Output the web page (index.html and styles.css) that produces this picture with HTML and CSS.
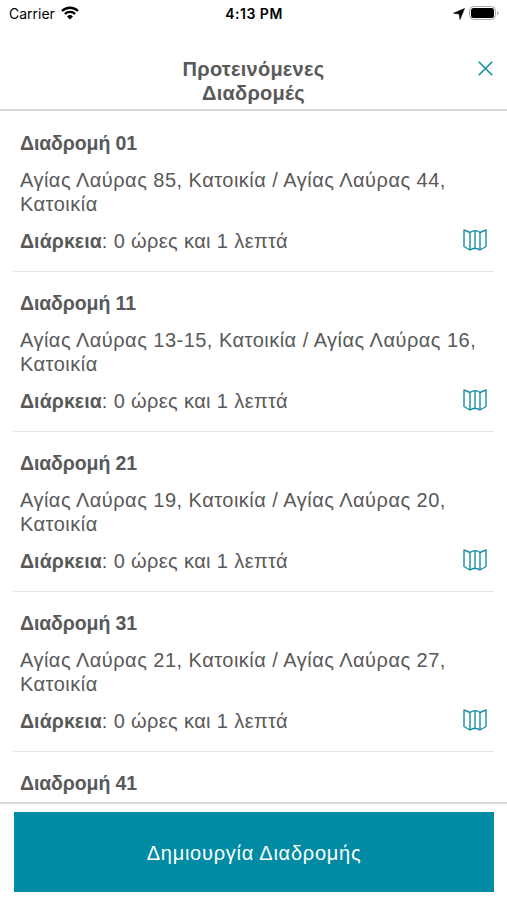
FILE: index.html
```html
<!DOCTYPE html>
<html lang="el">

<head>
    <meta charset="utf-8">
    <title>Προτεινόμενες Διαδρομές</title>
    <meta name="viewport" content="width=device-width,initial-scale=1">
    <link rel="stylesheet" href="styles.css">
</head>

<body>
    <svg class="sprite">
        <symbol id="map" viewBox="0 0 24 22">
            <path d="M1 1L7 3.500Q12-.2 17 3.500L23 1V17.500L17 21Q12 17.500 7 21L1 17.500zM7 3.500V21M12 1.700V19.200M17 3.500V21" />
        </symbol>
    </svg>
    <div class="status">
        <div class="carrier">
            <span>Carrier</span>
            <svg class="wifi" viewBox="0 0 18 14">
                <path d="M1 5a11.500 11.500 0 0 1 16 0M3.800 8a7.400 7.400 0 0 1 10.400 0" />
                <path class="dot" d="M9 13.500L6 10.400a4.300 4.300 0 0 1 6 0z" />
            </svg>
        </div>
        <div class="time">4:13 PM</div>
        <div class="power">
            <svg class="arrow" viewBox="0 0 12 12">
                <path d="M11.500 .5L7 11.500 6.200 6 .5 5.200z" />
            </svg>
            <svg class="battery" viewBox="0 0 30 14">
                <rect class="shell" x=".5" y=".5" width="26" height="13" rx="4" />
                <rect x="2" y="2" width="23" height="10" rx="2.500" />
                <path class="cap" d="M28 5v4.500q1.500-.7 1.500-2.250T28 5z" />
            </svg>
        </div>
    </div>
    <div class="header">
        <h1>Προτεινόμενες Διαδρομές</h1>
        <button class="close">
            <svg viewBox="0 0 14 14">
                <path d="M.7.7l12.600 12.600M13.300.7L.7 13.300" />
            </svg>
        </button>
    </div>
    <div class="list">
        <div class="route">
            <h2>Διαδρομή 01</h2>
            <p>Αγίας Λαύρας 85, Κατοικία / Αγίας Λαύρας 44, Κατοικία</p>
            <div class="duration">
                <span><b>Διάρκεια</b>: 0 ώρες και 1 λεπτά</span>
                <svg class="map"><use href="#map" /></svg>
            </div>
        </div>
        <div class="route">
            <h2>Διαδρομή 11</h2>
            <p>Αγίας Λαύρας 13-15, Κατοικία / Αγίας Λαύρας 16, Κατοικία</p>
            <div class="duration">
                <span><b>Διάρκεια</b>: 0 ώρες και 1 λεπτά</span>
                <svg class="map"><use href="#map" /></svg>
            </div>
        </div>
        <div class="route">
            <h2>Διαδρομή 21</h2>
            <p>Αγίας Λαύρας 19, Κατοικία / Αγίας Λαύρας 20, Κατοικία</p>
            <div class="duration">
                <span><b>Διάρκεια</b>: 0 ώρες και 1 λεπτά</span>
                <svg class="map"><use href="#map" /></svg>
            </div>
        </div>
        <div class="route">
            <h2>Διαδρομή 31</h2>
            <p>Αγίας Λαύρας 21, Κατοικία / Αγίας Λαύρας 27, Κατοικία</p>
            <div class="duration">
                <span><b>Διάρκεια</b>: 0 ώρες και 1 λεπτά</span>
                <svg class="map"><use href="#map" /></svg>
            </div>
        </div>
        <div class="route">
            <h2>Διαδρομή 41</h2>
        </div>
    </div>
    <div class="footer">
        <button class="create">Δημιουργία Διαδρομής</button>
    </div>
</body>

</html>
```
FILE: styles.css
```css
* {
    box-sizing: border-box;
}

body {
    display: flex;
    flex-direction: column;
    height: 900px;
    margin: 0;
    overflow: hidden;
    background: #fff;
    color: #595959;
    font-family: "Liberation Sans", Arial, sans-serif;
    font-size: 20px;
    line-height: 24px;
}

h1,
h2,
p {
    margin: 0;
    font-size: 20px;
}

button {
    padding: 0;
    border: 0;
    background: none;
    font: inherit;
}

svg {
    display: block;
}

.sprite {
    position: absolute;
    width: 0;
    height: 0;
}

.status {
    display: grid;
    grid-template-columns: 1fr auto 1fr;
    height: 28px;
    padding: 0 8px 0 9px;
    align-items: center;
    color: #000;
    font-family: Inter, "Liberation Sans", sans-serif;
    font-size: 14px;
}

.carrier,
.power {
    display: flex;
    align-items: center;
    gap: 6px;
}

.power {
    justify-content: flex-end;
}

.time {
    font-weight: 600;
    letter-spacing: .5px;
}

.wifi {
    width: 18px;
    height: 14px;
    margin-top: -2px;
    fill: none;
    stroke: #000;
    stroke-width: 2.400;
}

.wifi .dot {
    fill: #000;
    stroke: none;
}

.arrow {
    width: 12px;
    height: 12px;
    margin: -1px -2px 0 0;
    stroke: #000;
    stroke-width: .6;
}

.battery {
    width: 30px;
    height: 14px;
    margin-top: -2px;
}

.battery .shell {
    fill: none;
    stroke: #aaa;
}

.battery .cap {
    fill: #aaa;
}

.header {
    display: grid;
    grid-template-columns: 1fr 160px 1fr;
    flex: none;
    height: 83px;
    padding: 29px 13px 0;
    border-bottom: 2px solid #dadada;
}

.header h1 {
    grid-column: 2;
    text-align: center;
    letter-spacing: .25px;
}

.close {
    justify-self: end;
    align-self: start;
    margin-top: 4px;
}

.close svg {
    width: 15px;
    height: 15px;
    margin-right: 1px;
    fill: none;
    stroke: #168da5;
    stroke-width: 1.500;
}

.list {
    flex: 1;
    min-height: 0;
    padding: 1px 13px 0;
    overflow: hidden;
}

.route {
    height: 160px;
    padding: 19px 7px 0;
    border-bottom: 1px solid #e6e6e6;
}

.route h2 {
    font-size: 19.500px;
    letter-spacing: -.1px;
}

.route p {
    margin: 13px 0;
    letter-spacing: .48px;
}

.duration {
    display: flex;
    justify-content: space-between;
    letter-spacing: .37px;
}

.duration b {
    font-size: 19.500px;
    letter-spacing: .1px;
}

.map {
    width: 24px;
    height: 22px;
    fill: none;
    stroke: #168da5;
    stroke-width: 1.400;
    stroke-linejoin: round;
}

.footer {
    height: 98px;
    padding: 8px 13px 8px 14px;
    border-top: 2px solid #dadada;
}

.create {
    width: 100%;
    height: 80px;
    padding-top: 2px;
    background: #008aa3;
    color: #fff;
    letter-spacing: .75px;
}
```
